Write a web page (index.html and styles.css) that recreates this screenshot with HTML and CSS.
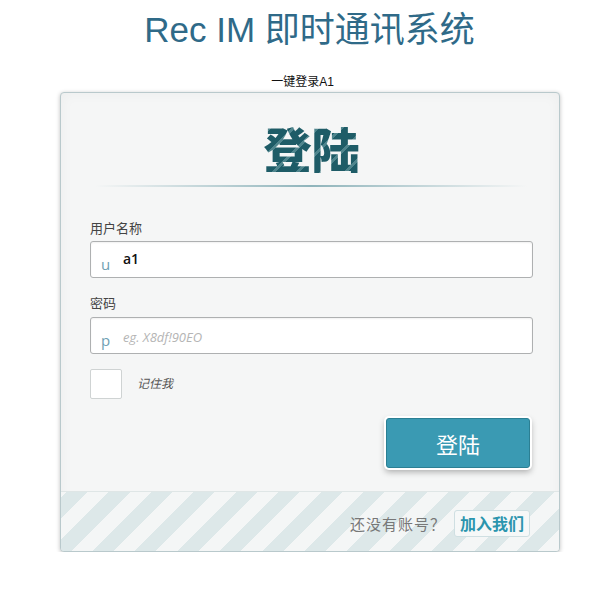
FILE: index.html
```html
<!DOCTYPE html>
<html lang="zh">
<head>
<meta charset="utf-8">
<title>Rec IM 即时通讯系统</title>
<link rel="stylesheet" href="styles.css">
</head>
<body>
<h1 class="site-title">Rec IM 即时通讯系统</h1>
<div class="quick-login">一键登录A1</div>
<div class="login-box">
  <div class="login-main">
    <h2 class="login-heading">登陆</h2>
    <div class="divider"></div>
    <form class="login-form">
      <label class="field-label">用户名称</label>
      <div class="field">
        <span class="field-icon">u</span>
        <span class="field-value">a1</span>
      </div>
      <label class="field-label second">密码</label>
      <div class="field">
        <span class="field-icon">p</span>
        <span class="field-placeholder">eg. X8df!90EO</span>
      </div>
      <div class="remember-row">
        <span class="checkbox"></span>
        <span class="remember-text">记住我</span>
      </div>
      <div class="actions">
        <button type="button" class="submit-btn">登陆</button>
      </div>
    </form>
  </div>
  <div class="login-footer">
    <span class="footer-text">还没有账号？</span>
    <span class="join-btn">加入我们</span>
  </div>
</div>
</body>
</html>
```

FILE: styles.css
```css
html, body {
  margin: 0;
  padding: 0;
  background: #ffffff;
}
body {
  font-family: "Liberation Sans", "Noto Sans CJK SC", sans-serif;
  color: #333;
}
.site-title {
  margin: 0;
  padding: 8px 0 0 14px;
  font-size: 35px;
  line-height: 44px;
  font-weight: normal;
  text-align: center;
  color: #2f6a88;
}
.quick-login {
  margin-top: 22px;
  font-size: 12px;
  line-height: 16px;
  text-align: center;
  color: #111;
}
.login-box {
  width: 498px;
  margin: 2px 0 0 60px;
  border: 1px solid #b9c9cc;
  border-radius: 4px;
  background: #f5f6f6;
  box-shadow: 0 1px 4px rgba(0, 0, 0, 0.25), inset 0 0 14px rgba(0, 0, 0, 0.04);
  overflow: hidden;
}
.login-main {
  padding: 26px 26px 0 29px;
}
.login-heading {
  margin: 0;
  font-family: "Noto Sans CJK SC", sans-serif;
  font-size: 48px;
  line-height: 56px;
  font-weight: 900;
  text-align: center;
  color: #1e5c67;
  background: repeating-linear-gradient(-45deg, #1e5c67 0 14px, #4f858d 14px 17px);
  -webkit-background-clip: text;
  background-clip: text;
  -webkit-text-fill-color: transparent;
}
.divider {
  height: 2px;
  margin: 10px 6px 0 5px;
  background: linear-gradient(to right, rgba(143, 180, 187, 0), #8fb4bb 50%, rgba(143, 180, 187, 0));
}
.login-form {
  display: flex;
  flex-direction: column;
  margin-top: 32px;
}
.field-label {
  font-family: "Noto Sans CJK SC", sans-serif;
  font-size: 13px;
  line-height: 18px;
  color: #444;
  margin-bottom: 4px;
}
.field-label.second {
  margin-top: 16px;
  margin-bottom: 5px;
}
.field {
  box-sizing: border-box;
  height: 37px;
  width: 443px;
  border: 1px solid #aeb0b1;
  border-radius: 3px;
  background: #fff;
  box-shadow: inset 0 1px 2px rgba(0, 0, 0, 0.06);
  display: flex;
  align-items: center;
  padding-left: 10px;
}
.field-icon {
  width: 22px;
  font-family: "Open Sans", sans-serif;
  font-size: 15px;
  color: #6f9fb3;
  padding-top: 9px;
}
.field-value {
  font-family: "Open Sans", sans-serif;
  font-size: 14px;
  font-weight: 600;
  color: #111;
  margin-top: -2px;
}
.field-placeholder {
  font-family: "Open Sans", sans-serif;
  font-style: italic;
  font-size: 13px;
  color: #b5b5b5;
  padding-top: 2px;
}
.remember-row {
  display: flex;
  align-items: center;
  margin-top: 15px;
}
.checkbox {
  width: 30px;
  height: 28px;
  border: 1px solid #cfd3d3;
  border-radius: 2px;
  background: #fff;
}
.remember-text {
  margin-left: 15px;
  margin-top: -4px;
  font-family: "Noto Sans CJK SC", sans-serif;
  font-style: italic;
  font-size: 12px;
  color: #555;
}
.actions {
  display: flex;
  justify-content: flex-end;
  margin-top: 19px;
  margin-bottom: 23px;
  padding-right: 3px;
}
.submit-btn {
  width: 144px;
  height: 50px;
  border: 1px solid #2b7f93;
  border-radius: 3px;
  background: #3a9ab3;
  color: #fff;
  font-family: "Noto Sans CJK SC", sans-serif;
  font-size: 22px;
  line-height: 1;
  padding: 0;
  box-shadow: 0 0 0 2px #fff, 0 3px 6px 1px rgba(0, 0, 0, 0.3);
}
.login-footer {
  height: 59px;
  border-top: 1px solid #dfe6e6;
  background: repeating-linear-gradient(-45deg, #f4f6f6 0 15px, #dde8e9 15px 30px);
  display: flex;
  align-items: center;
  justify-content: flex-end;
  padding-right: 29px;
}
.footer-text {
  font-family: "Noto Sans CJK SC", sans-serif;
  font-size: 15px;
  letter-spacing: 1px;
  color: #777;
  margin-right: 8px;
  margin-top: 4px;
}
.join-btn {
  font-family: "Noto Sans CJK SC", sans-serif;
  font-size: 16px;
  font-weight: 700;
  color: #2b95ae;
  border: 1px solid #cfdfe2;
  border-radius: 3px;
  background: #f6f8f8;
  padding: 0 5px;
  height: 25px;
  line-height: 25px;
  margin-top: 4px;
}
```
